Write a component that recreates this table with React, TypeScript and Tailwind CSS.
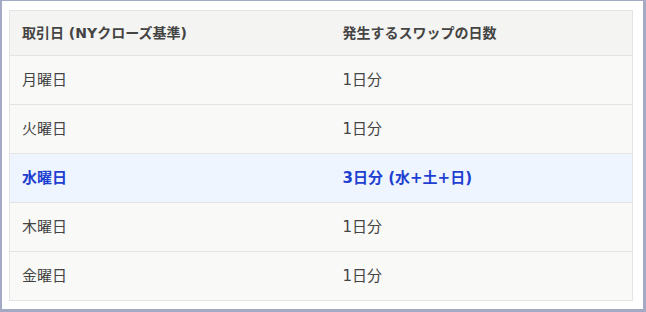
const rows = [
  { day: "月曜日", swap: "1日分" },
  { day: "火曜日", swap: "1日分" },
  { day: "水曜日", swap: "3日分 (水+土+日)", hl: true },
  { day: "木曜日", swap: "1日分" },
  { day: "金曜日", swap: "1日分" },
];

export default function App() {
  return (
    <div
      className="w-[646px] h-[312px] bg-white border-[#a4aac4] border-t border-l-2 border-r-[3px] border-b-[3px] pl-[7px] pt-[9px]"
      style={{ fontFamily: '"DejaVu Sans", "Noto Sans CJK JP", sans-serif' }}
    >
      <table className="w-[624px] border-collapse border border-[#e4e4e4] table-fixed">
        <colgroup>
          <col className="w-[321px]" />
          <col />
        </colgroup>
        <thead>
          <tr className="h-[45px] bg-[#f4f4f2] text-[14px] font-bold text-[#444]">
            <th className="text-left font-bold pl-[12px]">取引日 (NYクローズ基準)</th>
            <th className="text-left font-bold pl-[12px]">発生するスワップの日数</th>
          </tr>
        </thead>
        <tbody>
          {rows.map((r) => (
            <tr
              key={r.day}
              className={
                r.hl
                  ? "h-[49px] border-t border-[#e4e4e4] bg-[#eef5ff] text-[15px] font-bold text-[#1e3fd0]"
                  : "h-[49px] border-t border-[#e4e4e4] bg-[#f9f9f7] text-[15px] text-[#444]"
              }
            >
              <td className="pl-[12px]">{r.day}</td>
              <td className="pl-[12px]">{r.swap}</td>
            </tr>
          ))}
        </tbody>
      </table>
    </div>
  );
}
